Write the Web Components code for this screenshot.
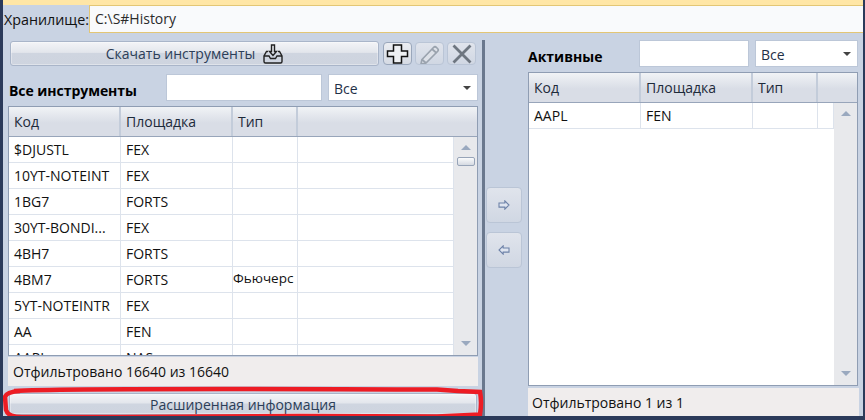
<!DOCTYPE html>
<html>
<head>
<meta charset="utf-8">
<style>
  html, body { margin: 0; padding: 0; background: #2b3a5a; }
  body { font-family: "Open Sans", "Noto Sans", sans-serif; font-size: 14px; }
</style>
</head>
<body>

<template id="shell-tmpl">
  <style>
    :host {
      display: flex; flex-direction: column; position: relative; box-sizing: border-box;
      width: 865px; height: 420px; overflow: hidden;
      background: #c9d3e3; color: #111;
      border-left: 3px solid #2b3a5a; border-right: 2px solid #2b3a5a; border-bottom: 4px solid #2b3a5a;
    }
    .band { height: 5px; background: #ffe6a6; flex: none; margin-left: -3px; margin-right: -2px; }
    .main { display: flex; flex: 1; min-height: 0; }
    svg { position: absolute; left: -3px; top: 0; pointer-events: none; overflow: visible; }
  </style>
  <div class="band"></div>
  <slot name="top"></slot>
  <div class="main"><slot></slot></div>
  <svg width="865" height="420" fill="none">
    <path d="M14 391 C70 388 220 389 437 389.500 L458 391 L480 392 Q482 402 480 414.500 L437 416.500 L300 416 L120 417 L22 417 Q8 417 6 410 L5 397 Q6 392 20 391 Z" stroke="#ed1c24" stroke-width="4.500"/>
  </svg>
</template>

<template id="path-tmpl">
  <style>
    :host { display: flex; align-items: center; height: 28px; flex: none; }
    .lbl { padding-left: 1px; width: 85px; flex: none; font-size: 14.300px; color: #111; }
    .val {
      flex: 1; height: 100%; box-sizing: border-box; margin-right: -2px;
      background: #f9fafc; border: 1px solid #e3c675; border-right: 0;
      padding-left: 5px; line-height: 25px; font-size: 14px; color: #2b2b2b;
    }
  </style>
  <span class="lbl"><slot name="label"></slot></span>
  <div class="val"><slot></slot></div>
</template>

<template id="btn-tmpl">
  <style>
    :host {
      display: flex; align-items: center; justify-content: center; box-sizing: border-box; gap: 8px;
      border: 1px solid #a9b5c9; border-radius: 3px; color: #2c3e58; font-size: 14px;
      background: linear-gradient(#f3f4f7 0%, #e3e6ec 45%, #cfd5e0 50%, #ced4df 100%);
      box-shadow: inset 0 0 0 1px rgba(255,255,255,.35);
    }
    :host([flat]) { background: linear-gradient(#e0e4ec, #d0d7e3); border-color: #bac5d6; box-shadow: none; border-radius: 4px; }
  </style>
  <slot></slot>
</template>

<template id="input-tmpl">
  <style>
    :host { display: block; box-sizing: border-box; background: #fff; border: 1px solid #bcc7d8; height: 27px; }
  </style>
</template>

<template id="select-tmpl">
  <style>
    :host {
      display: flex; align-items: center; justify-content: space-between; box-sizing: border-box;
      background: #fff; border: 1px solid #bcc7d8; height: 27px; padding: 1px 6px 0 5px;
      font-size: 14px; color: #1f3048;
    }
    i { width: 0; height: 0; border: 4px solid transparent; border-top: 4px solid #444; border-bottom: 0; }
  </style>
  <span><slot></slot></span><i></i>
</template>

<template id="table-tmpl">
  <style>
    :host {
      display: flex; flex-direction: column; box-sizing: border-box; min-height: 0;
      border: 1px solid #8f9db3; background: #fff; font-size: 14px; color: #111;
    }
    .head { display: flex; height: 29px; flex: none; border-bottom: 1px solid #98a5ba; background: linear-gradient(#f1f3f6, #d9dde6 55%); }
    .head div { box-sizing: border-box; border-right: 2px solid #c3ccda; padding-left: 5px; line-height: 29px; color: #1d2a3a; }
    .head div:last-child { flex: 1; border-right: 0; }
    .body { display: flex; flex: 1; min-height: 0; }
    .rows { flex: 1; overflow: hidden; min-width: 0; }
    .row { display: flex; height: 26px; box-sizing: border-box; border-bottom: 1px solid #dde3ec; }
    .row div { box-sizing: border-box; border-right: 1px solid #dde3ec; padding-left: 5px; line-height: 26px; white-space: nowrap; overflow: hidden; }
    .row div:last-child { flex: 1; }
    .row div.s { font-size: 13.500px; padding-left: 0; line-height: 22px; }
    .bar { width: 23px; flex: none; background: #e8e9ec; position: relative; display: flex; flex-direction: column; align-items: center; }
    .up, .down { width: 0; height: 0; border: 5px solid transparent; flex: none; }
    .up { border-top: 0; border-bottom: 5px solid #9aa9bf; margin-top: 8px; }
    .down { border-bottom: 0; border-top: 5px solid #9aa9bf; margin-top: auto; margin-bottom: 9px; }
    .thumb { width: 18px; height: 9px; margin-top: 7px; border: 1px solid #97a4b8; border-radius: 2px; background: linear-gradient(#fafbfc, #d5dae2); box-sizing: border-box; flex: none; }
    .nothumb { visibility: hidden; }
  </style>
  <div class="head"></div>
  <div class="body"><div class="rows"></div>
    <div class="bar"><div class="up"></div><div class="thumb"></div><div class="down"></div></div>
  </div>
</template>

<template id="status-tmpl">
  <style>
    :host { display: flex; align-items: center; box-sizing: border-box; background: #f0eded; padding-left: 5px; font-size: 14px; color: #111; }
  </style>
  <slot></slot>
</template>

<template id="left-tmpl">
  <style>
    :host { display: flex; flex-direction: column; width: 479px; flex: none; box-sizing: border-box; padding-top: 8px; }
    .tools { display: flex; align-items: center; height: 25px; padding-left: 7px; flex: none; }
    .filter { display: flex; align-items: center; margin-top: 8px; height: 27px; flex: none; padding-left: 6px; }
    b { font-size: 14px; color: #000; width: 157px; flex: none; padding-top: 5px; letter-spacing: -0.050px; }
    ::slotted([slot=table]) { margin: 5px 0 0 5px; width: 470px; height: 250px; flex: none; }
    ::slotted([slot=status]) { margin-left: 5px; width: 470px; height: 29px; flex: none; margin-top: 1px; }
    ::slotted([slot=more]) { margin: 7px 0 0 6px; width: 468px; height: 22px; flex: none; }
  </style>
  <div class="tools"><slot name="tools"></slot></div>
  <div class="filter"><b><slot name="title"></slot></b><slot name="filter"></slot></div>
  <slot name="table"></slot>
  <slot name="status"></slot>
  <slot name="more"></slot>
</template>

<template id="mid-tmpl">
  <style>
    :host {
      display: flex; flex-direction: column; gap: 9px; width: 46px; flex: none; box-sizing: border-box;
      border-left: 3px solid #6a788e; margin-top: 7px; padding: 147px 0 0 0;
    }
    ::slotted(*) { width: 36px; height: 36px; margin-left: 1px; }
  </style>
  <slot></slot>
</template>

<template id="right-tmpl">
  <style>
    :host { display: flex; flex-direction: column; flex: 1; min-width: 0; box-sizing: border-box; padding-top: 7px; }
    .filter { display: flex; align-items: center; height: 27px; flex: none; }
    b { font-size: 14px; color: #000; width: 111px; flex: none; padding-top: 5px; }
    ::slotted([slot=table]) { margin-top: 5px; width: 330px; height: 314px; flex: none; }
    ::slotted([slot=status]) { width: 331px; height: 28px; flex: none; margin-top: 2px; padding-left: 4px; }
  </style>
  <div class="filter"><b><slot name="title"></slot></b><slot name="filter"></slot></div>
  <slot name="table"></slot>
  <slot name="status"></slot>
</template>

<script>
  function mount(name, tmplId, Extra) {
    customElements.define(name, class extends (Extra || HTMLElement) {
      connectedCallback() {
        if (this.shadowRoot) return;
        this.attachShadow({ mode: 'open' }).append(document.getElementById(tmplId).content.cloneNode(true));
        if (this.render) this.render();
      }
    });
  }

  mount('app-shell', 'shell-tmpl');
  mount('path-bar', 'path-tmpl');
  mount('ui-button', 'btn-tmpl');
  mount('ui-input', 'input-tmpl');
  mount('ui-select', 'select-tmpl');
  mount('status-bar', 'status-tmpl');
  mount('left-pane', 'left-tmpl');
  mount('mid-pane', 'mid-tmpl');
  mount('right-pane', 'right-tmpl');

  class TableBase extends HTMLElement {
    render() {
      const widths = this.getAttribute('cols').split(',').map(Number);
      const heads = ['Код', 'Площадка', 'Тип', ''];
      const head = this.shadowRoot.querySelector('.head');
      heads.forEach((h, i) => {
        const d = document.createElement('div');
        d.textContent = h;
        if (i < 3) d.style.width = widths[i] + 'px';
        head.append(d);
      });
      const rows = this.shadowRoot.querySelector('.rows');
      JSON.parse(this.getAttribute('rows')).forEach(r => {
        const row = document.createElement('div');
        row.className = 'row';
        [r[0], r[1], r[2] || '', ''].forEach((c, i) => {
          const d = document.createElement('div');
          d.textContent = c;
          if (i < 3) d.style.width = widths[i] + 'px';
          if (i == 2 && c) d.className = 's';
          row.append(d);
        });
        rows.append(row);
      });
      if (this.hasAttribute('nothumb')) this.shadowRoot.querySelector('.thumb').className = 'thumb nothumb';
    }
  }
  mount('data-table', 'table-tmpl', TableBase);
</script>

<app-shell>
  <path-bar slot="top"><span slot="label">Хранилище:</span>C:\S#History</path-bar>

  <left-pane>
    <ui-button slot="tools" style="width:369px;height:25px">
      Скачать инструменты
      <svg width="20" height="20" viewBox="0 0 20 20" fill="none" stroke="#222" stroke-width="1.400">
        <path d="M5 7.500H3.500L1 12v5.500q0 1.500 1.500 1.500h15q1.500 0 1.500-1.500V12l-2.500-4.500H15"/>
        <path d="M1 12h5l1.500 2.500h5L14 12h5"/>
        <path d="M8.500 1h3v6.500h2L10 11.500 6.500 7.500h2z"/>
      </svg>
    </ui-button>
    <ui-button slot="tools" flat style="width:29px;height:23px;margin-left:4px;background:linear-gradient(#eceef2,#d5dae3);border-color:#9aa7bb">
      <svg width="23" height="21" viewBox="0 0 23 21"><path d="M7.500 2h8v6h6v5.500h-6V20h-8v-6.500h-6V8h6z" fill="#eef0f3" stroke="#111" stroke-width="1.500"/></svg>
    </ui-button>
    <ui-button slot="tools" flat style="width:29px;height:23px;margin-left:3px">
      <svg width="22" height="20" viewBox="0 0 22 20" fill="#dde1e8" stroke="#9aa3ae" stroke-width="1.700"><path d="M3 15.500 14.500 3.500q1.500-1.500 3 0l1 1q1.500 1.500 0 3L7 19l-5 1z"/><path d="M3 15.500l4 3.500M13 5l4.500 4" fill="none"/></svg>
    </ui-button>
    <ui-button slot="tools" flat style="width:29px;height:23px;margin-left:3px">
      <svg width="22" height="20" viewBox="0 0 22 20" fill="none" stroke="#6e7680" stroke-width="2.800"><path d="M2.500 1.500 19.500 18.500M19.500 1.500 2.500 18.500"/></svg>
    </ui-button>

    <span slot="title">Все инструменты</span>
    <ui-input slot="filter" style="width:156px"></ui-input>
    <ui-select slot="filter" style="width:150px;margin-left:6px">Все</ui-select>

    <data-table slot="table" cols="112,112,65" rows='[["$DJUSTL","FEX"],["10YT-NOTEINT","FEX"],["1BG7","FORTS"],["30YT-BONDI...","FEX"],["4BH7","FORTS"],["4BM7","FORTS","Фьючерс"],["5YT-NOTEINTR","FEX"],["AA","FEN"],["AAPL","NAS"]]'></data-table>
    <status-bar slot="status">Отфильтровано 16640 из 16640</status-bar>
    <ui-button slot="more">Расширенная информация</ui-button>
  </left-pane>

  <mid-pane>
    <ui-button flat>
      <svg width="12" height="10" viewBox="0 0 14 12"><path d="M1 3.500h7V1l5 5-5 5V8.500H1z" fill="#dfe5f0" stroke="#6d82a8" stroke-width="1.300"/></svg>
    </ui-button>
    <ui-button flat>
      <svg width="12" height="10" viewBox="0 0 14 12"><path d="M13 3.500H6V1L1 6l5 5V8.500h7z" fill="#dfe5f0" stroke="#6d82a8" stroke-width="1.300"/></svg>
    </ui-button>
  </mid-pane>

  <right-pane>
    <span slot="title">Активные</span>
    <ui-input slot="filter" style="width:110px"></ui-input>
    <ui-select slot="filter" style="width:103px;margin-left:6px">Все</ui-select>
    <data-table slot="table" nothumb cols="112,112,65" rows='[["AAPL","FEN"]]'></data-table>
    <status-bar slot="status">Отфильтровано 1 из 1</status-bar>
  </right-pane>
</app-shell>
</body>
</html>
